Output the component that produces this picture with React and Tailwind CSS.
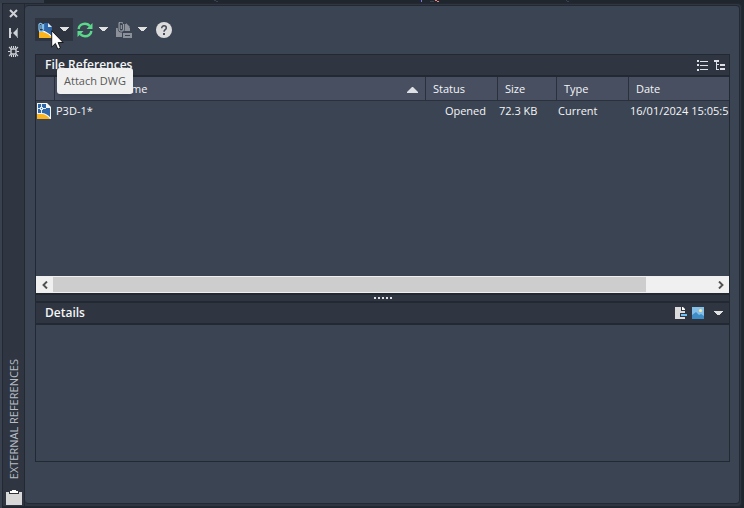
import React from "react";

function Caret() {
  return (
    <svg width="9" height="5" viewBox="0 0 9 5" fill="#e0e0e0" aria-hidden="true">
      <path d="M0 0h9v1h-1v1h-1v1h-1v1h-3v-1h-1v-1h-1v-1h-1z" />
    </svg>
  );
}

function AttachIcon() {
  return (
    <svg width="15" height="16" viewBox="0 0 15 16" aria-hidden="true">
      <path d="M6 1h4l4 4v9H6z" fill="#2f66a8" />
      <path d="M10 1l4 4h-4z" fill="#dfe6ee" />
      <path d="M1 9h6l8 5v2H1z" fill="#f4f4f2" />
      <path d="M1 10h4c4 1 7 3 9 6H1z" fill="#fbb41d" />
      <path d="M7 9h7v5c-2-2-4-4-7-5z" fill="#2f66a8" />
      <path d="M5.500 2v5a2.200 2.200 0 0 1-4.500 0V2.500a1.700 1.700 0 0 1 3.200 0V7" fill="none" stroke="#7fc0ef" strokeWidth="1.300" />
      <path d="M2.800 3v4" stroke="#7fc0ef" />
    </svg>
  );
}

function DrawingIcon() {
  return (
    <svg className="block" width="14" height="16" viewBox="0 0 14 16" aria-hidden="true">
      <path d="M0 0h10l4 4v12H0z" fill="#f4f4f2" />
      <path d="M1 1h8v4h4v9c-2-2-5-4-8-4H1z" fill="#2f66a8" />
      <path d="M0 11h4c4 0 7 2 9 5H0z" fill="#fbb41d" />
      <path d="M0 5.500h9M4.500 1v9" stroke="#e4ecf5" fill="none" />
      <rect x="3" y="4" width="3" height="3" fill="#e4ecf5" />
      <rect x="4" y="5" width="1" height="1" fill="#2f66a8" />
    </svg>
  );
}

function RefreshIcon() {
  return (
    <svg width="16" height="16" viewBox="0 0 16 16" aria-hidden="true">
      <path d="M1.600 7C2 3.500 5 1.800 8 1.800c2 0 3.600.8 4.800 2M14.400 9c-.4 3.500-3.400 5.200-6.400 5.200-2 0-3.600-.8-4.800-2" fill="none" stroke="#5bd98a" strokeWidth="2.400" />
      <path d="M15.500 1v6h-6zM.5 15V9h6z" fill="#5bd98a" />
    </svg>
  );
}

function PathIcon() {
  return (
    <svg width="16" height="16" viewBox="0 0 16 16" aria-hidden="true">
      <path d="M0 6h3v4h5V2h2l4 4v3H7v6H0z" fill="#8b9099" />
      <path d="M10 1l4 4h-4z" fill="#8b9099" />
      <path d="M7 11h9v5H7z" fill="#8b9099" />
      <path d="M6 10h8v1H7v4H6z" fill="#3b4453" />
      <rect x="9" y="13" width="5" height="1" fill="#3b4453" />
      <path d="M7.500 1.500V7a2.200 2.200 0 0 1-4.400 0V2a1.700 1.700 0 0 1 3-.5V7" fill="none" stroke="#3b4453" strokeWidth="2.600" />
      <path d="M7.500 2v5a2.200 2.200 0 0 1-4.400 0V2a1.700 1.700 0 0 1 3.400-.5M5.300 3v4" fill="none" stroke="#979ca4" strokeWidth="1.200" />
    </svg>
  );
}

function HelpIcon() {
  return (
    <svg width="16" height="16" viewBox="0 0 16 16" aria-hidden="true">
      <circle cx="8" cy="8" r="8" fill="#dcdcdc" />
      <path d="M5.700 6.300C5.700 4.700 6.700 3.800 8 3.800s2.300.8 2.300 2.100C10.300 7.600 8 7.700 8 9.700" fill="none" stroke="#444b57" strokeWidth="1.500" />
      <rect x="7" y="11" width="2" height="2" fill="#444b57" />
    </svg>
  );
}

function Cursor() {
  return (
    <svg className="pointer-events-none absolute left-4 top-3" width="13" height="20" viewBox="0 0 12 19" aria-hidden="true">
      <path d="M.5 .7v15.500l3.500-3.400 2.300 5.400 2.500-1.100-2.200-5.200h4.800z" fill="#fff" stroke="#111" strokeWidth=".9" />
    </svg>
  );
}

function Rail() {
  return (
    <div className="flex w-[22px] shrink-0 flex-col items-center border-r border-[#232933] bg-[#2f3541]">
      <button aria-label="Close" className="flex h-[19px] w-5 items-center justify-center">
        <svg width="9" height="9" viewBox="0 0 9 9">
          <path d="M1 1l7 7M8 1l-7 7" stroke="#cfd2d6" strokeWidth="2" />
        </svg>
      </button>
      <button aria-label="Auto-hide" className="flex h-[19px] w-5 items-center justify-center">
        <svg width="9" height="10" viewBox="0 0 9 10">
          <path d="M0 0h2v10H0zM8 1v8L4 5z" fill="#cfd2d6" />
          <path d="M8 0h1v10H8z" fill="#9ba0a8" />
          <path d="M2 4h1v2H2z" fill="#8f959e" />
        </svg>
      </button>
      <button aria-label="Properties" className="flex h-[19px] w-5 items-center justify-center">
        <svg width="11" height="11" viewBox="0 0 11 11" fill="none" stroke="#cfd2d6">
          <rect x="3" y="3" width="5" height="5" rx="1" strokeWidth="1.400" />
          <path d="M5.500 0v2.500M5.500 8.500V11M0 5.500h2.500M8.500 5.500H11M1 1l2.500 2.500M7.500 7.500L10 10M10 1L7.500 3.500M3.500 7.500L1 10M3.500 0v2M7.500 0v2M3.500 11V9M7.500 11V9" strokeWidth="1.100" />
        </svg>
      </button>
      <div className="mt-auto rotate-180 text-[#b9bec6] [writing-mode:vertical-rl]">
        EXTERNAL REFERENCES
      </div>
      <svg className="mt-[10px] mb-px" width="16" height="16" viewBox="0 0 16 16" aria-hidden="true">
        <path d="M0 3h16v13H0z" fill="#d8d8d8" />
        <path d="M3 2h2V0h6v2h2v3H3z" fill="#2f3541" />
        <path d="M4 2h2V1h4v1h2v2H4z" fill="#fff" />
      </svg>
    </div>
  );
}

function Toolbar() {
  return (
    <div className="flex h-[23px] items-center">
      <div className="relative flex h-[23px] w-[38px] items-center bg-[#2e3440] pl-[3px]">
        <button aria-label="Attach DWG" aria-describedby="attach-tip">
          <AttachIcon />
        </button>
        <button aria-label="Attach options" className="ml-[7px]">
          <Caret />
        </button>
        <Cursor />
      </div>
      <button aria-label="Refresh" className="ml-1">
        <RefreshIcon />
      </button>
      <button aria-label="Refresh options" className="ml-[6px]">
        <Caret />
      </button>
      <button aria-label="Change path" className="ml-[8px]">
        <PathIcon />
      </button>
      <button aria-label="Path options" className="ml-[6px]">
        <Caret />
      </button>
      <button aria-label="Help" className="ml-[9px]">
        <HelpIcon />
      </button>
    </div>
  );
}

function FileTable() {
  const head = "h-6 border-r border-b border-[#2a303c] bg-[#474f61] pl-[7px] text-left font-normal";
  return (
    <table className="w-full table-fixed border-separate border-spacing-0 whitespace-nowrap">
      <colgroup>
        <col className="w-[19px]" />
        <col />
        <col className="w-[72px]" />
        <col className="w-[59px]" />
        <col className="w-[72px]" />
        <col className="w-[100px]" />
      </colgroup>
      <thead>
        <tr>
          <th className={head} aria-label="Icon" />
          <th className={head}>
            <div className="flex items-center justify-between pr-[7px]">
              <span>Reference Name</span>
              <svg className="mt-[3px]" width="11" height="6" viewBox="0 0 11 6" aria-hidden="true">
                <path d="M5 0h1l5 5v1H0V5z" fill="#dde0e4" />
              </svg>
            </div>
          </th>
          <th className={head}>Status</th>
          <th className={head}>Size</th>
          <th className={head}>Type</th>
          <th className="h-6 border-b border-[#2a303c] bg-[#474f61] pl-[7px] text-left font-normal">Date</th>
        </tr>
      </thead>
      <tbody>
        <tr className="h-5">
          <td className="pl-px">
            <DrawingIcon />
          </td>
          <td className="pl-px">P3D-1*</td>
          <td className="pr-3 text-right">Opened</td>
          <td className="pl-px">72.3 KB</td>
          <td className="pl-px">Current</td>
          <td className="overflow-hidden pl-px">16/01/2024 15:05:55</td>
        </tr>
      </tbody>
    </table>
  );
}

function Chevron({ d }) {
  return (
    <svg width="6" height="8" viewBox="0 0 6 8" aria-hidden="true">
      <path d={d} fill="none" stroke="#505050" strokeWidth="1.900" />
    </svg>
  );
}

function ScrollBar() {
  return (
    <div className="flex h-[17px] bg-[#f0f0f0] py-px">
      <button aria-label="Scroll left" className="flex w-[17px] items-center justify-center">
        <Chevron d="M5 .5L1.500 4 5 7.500" />
      </button>
      <div className="flex-1">
        <div className="h-full w-[90%] bg-[#cdcdcd]" />
      </div>
      <button aria-label="Scroll right" className="flex w-[17px] items-center justify-center">
        <Chevron d="M1 .5L4.500 4 1 7.500" />
      </button>
    </div>
  );
}

export default function App() {
  return (
    <div className="flex min-h-screen flex-col bg-[#20262e] font-['Open_Sans','Noto_Sans',sans-serif] text-[11px] leading-4 text-[#f4f5f7]">
      <div className="h-[3px] shrink-0">
        <svg className="block h-[3px] w-full" aria-hidden="true">
          <rect width="44" height="3" fill="#343c49" />
          <rect x="421" width="1" height="2" fill="#7d78e0" />
          <rect x="435" width="2" height="1" fill="#f08080" />
          <rect x="437" y="1" width="2" height="1" fill="#f08080" />
          <path d="M214 0h2v1h-2zM216 1h2v1h-2zM430 1h4v1h-4zM566 0h1v1h-1zM567 1h2v1h-2z" fill="#39414f" />
        </svg>
      </div>
      <div className="flex flex-1 border-l-2 border-[#39414f]">
        <div className="mr-[2px] mb-px flex flex-1 rounded-sm border border-[#232933] bg-[#2f3541]">
          <Rail />
          <div className="mr-px mt-px mb-[2px] flex min-w-0 flex-1 flex-col rounded-sm border-t border-r border-b border-[#232933] bg-[#3b4453] pt-3 pr-[9px] pb-[41px] pl-[10px]">
            <Toolbar />
            <main className="relative mt-[13px] flex flex-1 flex-col border border-[#232933]">
              <section className="flex flex-col">
                <header className="flex h-[22px] items-center border-b-2 border-[#232933] bg-[#2f3541] pr-1 pl-[9px]">
                  <h2 className="mr-auto text-[12px] font-semibold">File References</h2>
                  <button aria-label="List view" className="mr-[6px]">
                    <svg width="11" height="11" viewBox="0 0 11 11" fill="#dde0e4">
                      <path d="M0 0h2v2H0zM0 4h2v2H0zM0 9h2v2H0zM3 1h8v1H3zM3 5h8v1H3zM3 9h8v1H3z" />
                    </svg>
                  </button>
                  <button aria-label="Tree view">
                    <svg width="11" height="11" viewBox="0 0 11 11" fill="#dde0e4">
                      <path d="M0 0h5v2H0zM2 2h1v8H2zM3 4h2v1H3zM3 9h2v1H3zM6 4h5v2H6zM6 8h5v2H6z" />
                    </svg>
                  </button>
                </header>
                <div className="min-h-[199px]">
                  <FileTable />
                </div>
                <ScrollBar />
              </section>
              <div className="flex h-[10px] items-center justify-center gap-[2px] border-y-2 border-[#232933] bg-[#2f3541]">
                <i className="size-[2px] bg-[#e0e0e0]" />
                <i className="size-[2px] bg-[#e0e0e0]" />
                <i className="size-[2px] bg-[#e0e0e0]" />
                <i className="size-[2px] bg-[#e0e0e0]" />
                <i className="size-[2px] bg-[#e0e0e0]" />
              </div>
              <section className="flex flex-1 flex-col">
                <header className="flex h-[22px] items-center border-b-2 border-[#232933] bg-[#2f3541] pr-[6px] pl-[9px]">
                  <h2 className="mr-auto text-[12px] font-semibold">Details</h2>
                  <button aria-label="Details" className="mr-[5px]">
                    <svg width="12" height="12" viewBox="0 0 12 12">
                      <path d="M0 0h6v4h4v8H0z" fill="#dcdcdc" />
                      <path d="M7 0h1l2 2v1H7z" fill="#fff" />
                      <path d="M5 6h7v4H5z" fill="#2f3541" />
                      <path d="M6 7h6v2H6z" fill="#6fc0f5" />
                    </svg>
                  </button>
                  <button aria-label="Preview" className="mr-[10px]">
                    <svg width="12" height="12" viewBox="0 0 12 12">
                      <path d="M0 0h12v12H0z" fill="#84bfea" />
                      <path d="M0 8l4-3 3 3 2-1 3 2v3H0z" fill="#3f8cc4" />
                      <circle cx="8.500" cy="3.500" r="1.600" fill="#f5e6a0" />
                    </svg>
                  </button>
                  <button aria-label="Details options">
                    <Caret />
                  </button>
                </header>
              </section>
              <div id="attach-tip" role="tooltip" className="absolute top-[13px] left-[21px] rounded-[3px] bg-[#f0f0f0] px-[7px] py-[5px] whitespace-nowrap text-[#575757] shadow-md">
                Attach DWG
              </div>
            </main>
          </div>
        </div>
      </div>
    </div>
  );
}
